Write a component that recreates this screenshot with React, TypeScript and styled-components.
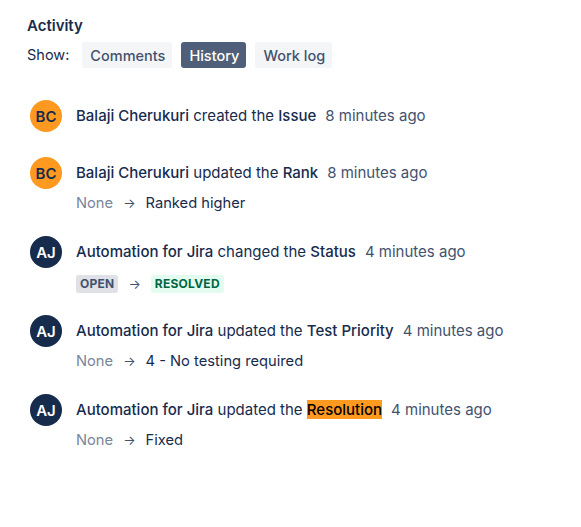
import React from 'react'
import styled, { createGlobalStyle } from 'styled-components'

const GlobalStyle = createGlobalStyle`
  html, body {
    margin: 0;
    background: #ffffff;
  }
  body {
    font-family: Inter, "Noto Sans", "Liberation Sans", sans-serif;
    color: #172b4d;
    -webkit-font-smoothing: antialiased;
  }
`

const colors = {
  text: '#172b4d',
  subtle: '#42526e',
  muted: '#7a869a',
  chip: '#f4f5f7',
  chipActive: '#505f79',
  orange: '#ff991f',
  navy: '#172b4d',
}

const Page = styled.div`
  padding: 16px 27px 40px;
  width: 581px;
  height: 527px;
  box-sizing: border-box;
`

const Heading = styled.h2`
  margin: 0;
  font-size: 15px;
  line-height: 20px;
  font-weight: 600;
  color: ${colors.text};
`

const FilterBar = styled.div`
  display: flex;
  align-items: center;
  margin-top: 6px;
`

const FilterLabel = styled.span`
  font-size: 14.5px;
  line-height: 20px;
  color: ${colors.text};
  margin-right: 13px;
`

const FilterButtons = styled.div`
  display: flex;
  gap: 9px;
`

const FilterButton = styled.button<{ $active?: boolean }>`
  height: 26px;
  padding: 0 7px 0 8px;
  border: none;
  border-radius: 3px;
  font-family: inherit;
  font-size: 14.5px;
  font-weight: 500;
  background: ${({ $active }) => ($active ? colors.chipActive : colors.chip)};
  color: ${({ $active }) => ($active ? '#ffffff' : colors.subtle)};
  cursor: pointer;
`

const List = styled.ul`
  list-style: none;
  margin: 32px 0 0;
  padding: 0 0 0 3px;
  display: flex;
  flex-direction: column;
  gap: 23px;
`

const Item = styled.li`
  display: flex;
  align-items: flex-start;
  gap: 14px;
  min-height: 34px;
`

const Avatar = styled.div<{ $tone: 'orange' | 'navy' }>`
  width: 32px;
  height: 32px;
  border-radius: 50%;
  flex-shrink: 0;
  display: flex;
  align-items: center;
  justify-content: center;
  font-size: 15px;
  font-weight: 600;
  background: ${({ $tone }) => ($tone === 'orange' ? colors.orange : colors.navy)};
  color: ${({ $tone }) => ($tone === 'orange' ? colors.text : '#ffffff')};
`

const Content = styled.div`
  display: flex;
  flex-direction: column;
  padding-top: 6px;
  min-width: 0;
`

const MainLine = styled.div`
  font-size: 15px;
  line-height: 20px;
  color: ${colors.text};
  white-space: nowrap;
`

const Strong = styled.span<{ $highlight?: boolean }>`
  font-weight: 500;
  color: ${({ $highlight }) => ($highlight ? '#000000' : colors.text)};
  background: ${({ $highlight }) => ($highlight ? colors.orange : 'transparent')};
`

const Time = styled.span`
  margin-left: 9px;
  color: ${colors.subtle};
`

const ChangeLine = styled.div`
  display: flex;
  align-items: center;
  gap: 10px;
  margin-top: 10px;
  font-size: 14.7px;
  line-height: 20px;
  color: ${colors.text};
`

const OldValue = styled.span`
  color: ${colors.muted};
`

const Arrow = styled.span`
  color: ${colors.subtle};
  font-size: 13px;
`

const Lozenge = styled.span<{ $tone: 'default' | 'success' }>`
  display: inline-flex;
  align-items: center;
  height: 18px;
  padding: 0 4px;
  border-radius: 3px;
  font-size: 12px;
  font-weight: 700;
  letter-spacing: 0.02em;
  text-transform: uppercase;
  background: ${({ $tone }) => ($tone === 'success' ? '#e3fcef' : '#dfe1e6')};
  color: ${({ $tone }) => ($tone === 'success' ? '#006644' : colors.subtle)};
`

const StatusLine = styled(ChangeLine)`
  margin-top: 14px;
  height: 16px;
`

type Entry = {
  initials: string
  tone: 'orange' | 'navy'
  actor: string
  verb: string
  field: string
  highlight?: boolean
  time: string
  from?: string
  to?: string
  status?: boolean
}

const entries: Entry[] = [
  { initials: 'BC', tone: 'orange', actor: 'Balaji Cherukuri', verb: 'created', field: 'Issue', time: '8 minutes ago' },
  { initials: 'BC', tone: 'orange', actor: 'Balaji Cherukuri', verb: 'updated', field: 'Rank', time: '8 minutes ago', from: 'None', to: 'Ranked higher' },
  { initials: 'AJ', tone: 'navy', actor: 'Automation for Jira', verb: 'changed', field: 'Status', time: '4 minutes ago', from: 'Open', to: 'Resolved', status: true },
  { initials: 'AJ', tone: 'navy', actor: 'Automation for Jira', verb: 'updated', field: 'Test Priority', time: '4 minutes ago', from: 'None', to: '4 - No testing required' },
  { initials: 'AJ', tone: 'navy', actor: 'Automation for Jira', verb: 'updated', field: 'Resolution', highlight: true, time: '4 minutes ago', from: 'None', to: 'Fixed' },
]

export default function App() {
  return (
    <Page>
      <GlobalStyle />
      <Heading>Activity</Heading>
      <FilterBar>
        <FilterLabel>Show:</FilterLabel>
        <FilterButtons>
          <FilterButton>Comments</FilterButton>
          <FilterButton $active>History</FilterButton>
          <FilterButton>Work log</FilterButton>
        </FilterButtons>
      </FilterBar>

      <List>
        {entries.map((e, i) => (
          <Item key={i}>
            <Avatar $tone={e.tone}>{e.initials}</Avatar>
            <Content>
              <MainLine>
                <Strong>{e.actor}</Strong> {e.verb} the <Strong $highlight={e.highlight}>{e.field}</Strong>
                <Time>{e.time}</Time>
              </MainLine>
              {e.status ? (
                <StatusLine>
                  <Lozenge $tone="default">{e.from}</Lozenge>
                  <Arrow>→</Arrow>
                  <Lozenge $tone="success">{e.to}</Lozenge>
                </StatusLine>
              ) : e.from ? (
                <ChangeLine>
                  <OldValue>{e.from}</OldValue>
                  <Arrow>→</Arrow>
                  <span>{e.to}</span>
                </ChangeLine>
              ) : null}
            </Content>
          </Item>
        ))}
      </List>
    </Page>
  )
}
